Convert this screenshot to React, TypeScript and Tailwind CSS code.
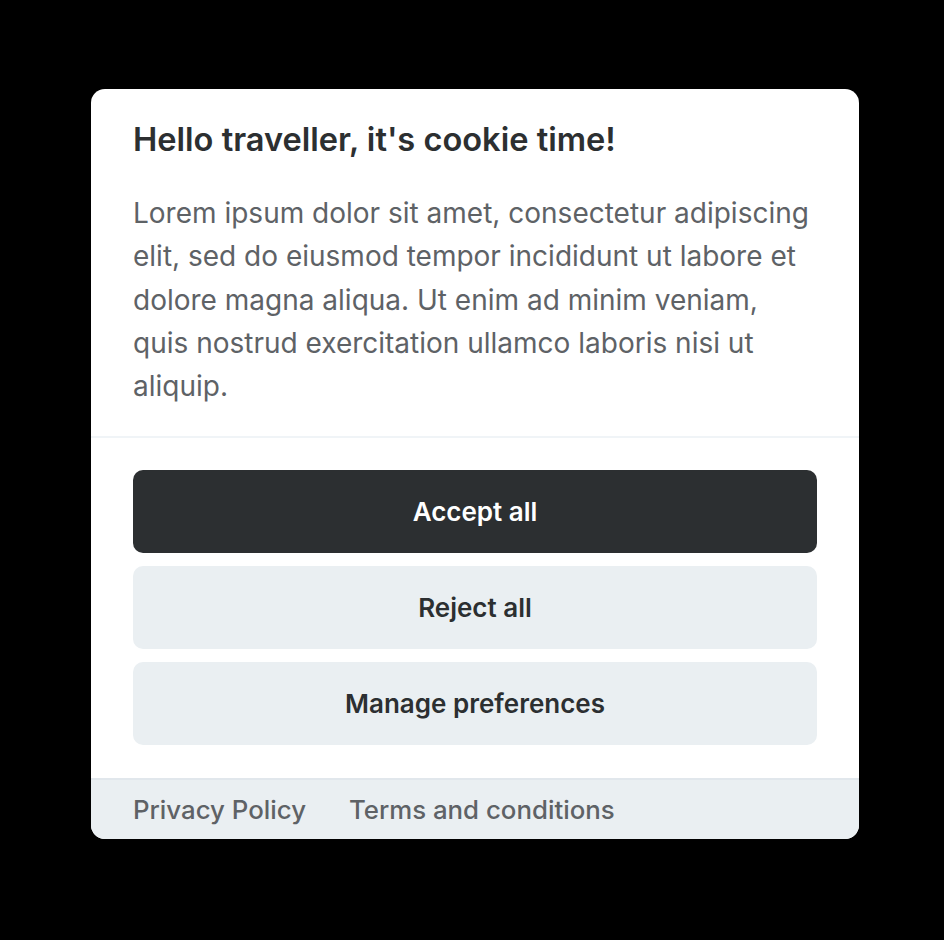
import React from "react";

export default function App() {
  return (
    <div
      className="min-h-[940px] w-full bg-black flex items-start pl-[91px] pt-[89px]"
      style={{ fontFamily: "Inter, 'Noto Sans', sans-serif" }}
    >
      <div className="w-[768px] bg-white rounded-[14px] overflow-hidden flex flex-col">
        <div className="px-[42px] pt-[30px] pb-[28px] border-b-2 border-[#f0f4f7]">
          <h2 className="text-[32.6px] leading-[41px] font-semibold text-[#2c2f31]">
            Hello traveller, it's cookie time!
          </h2>
          <p className="mt-[32px] text-[28px] leading-[43.3px] text-[#5e6266]">
            Lorem ipsum dolor sit amet, consectetur adipiscing elit, sed do eiusmod tempor incididunt ut labore et dolore magna aliqua. Ut enim ad minim veniam, quis nostrud exercitation ullamco laboris nisi ut aliquip.
          </p>
        </div>
        <div className="px-[42px] pt-[32px] pb-[33px] flex flex-col gap-[13px]">
          <button className="h-[83px] w-full rounded-[10px] bg-[#2c2f31] text-white text-[26px] font-semibold">
            Accept all
          </button>
          <button className="h-[83px] w-full rounded-[10px] bg-[#eaeff2] text-[#2c2f31] text-[26px] font-semibold">
            Reject all
          </button>
          <button className="h-[83px] w-full rounded-[10px] bg-[#eaeff2] text-[#2c2f31] text-[26px] font-semibold">
            Manage preferences
          </button>
        </div>
        <div className="h-[61px] bg-[#eaeff2] border-t-2 border-[#e1e7ec] px-[42px] flex items-center gap-[43px] text-[25.8px] font-medium text-[#5e6266]">
          <span>Privacy Policy</span>
          <span>Terms and conditions</span>
        </div>
      </div>
    </div>
  );
}
